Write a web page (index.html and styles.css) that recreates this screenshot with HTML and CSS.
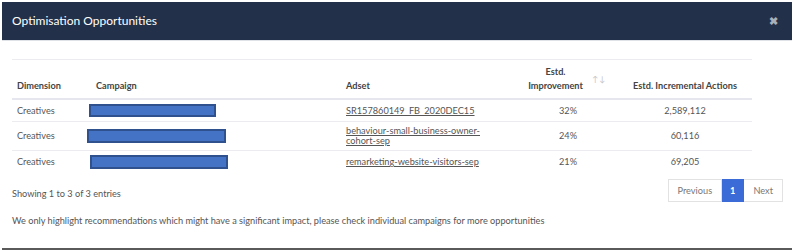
FILE: index.html
```html
<!DOCTYPE html>
<html lang="en">
<head>
  <meta charset="UTF-8" />
  <title>Optimisation Opportunities</title>
  <link rel="stylesheet" href="styles.css">
</head>
<body>
  <div class="modal">
    <div class="modal-header">
      <div class="modal-title">Optimisation Opportunities</div>
      <span class="close">&#10006;</span>
    </div>

    <div class="modal-body">
      <table class="opps">
        <colgroup>
          <col class="c-dim">
          <col class="c-camp">
          <col class="c-adset">
          <col class="c-impr">
          <col class="c-act">
        </colgroup>
        <thead>
          <tr>
            <th>Dimension</th>
            <th>Campaign</th>
            <th>Adset</th>
            <th class="center sorting">Estd.<br>Improvement<span class="sort">&#8593;&#8595;</span></th>
            <th class="center">Estd. Incremental Actions</th>
          </tr>
        </thead>
        <tbody>
          <tr>
            <td>Creatives</td>
            <td class="camp"><span class="redact r1"></span></td>
            <td class="adset"><a href="#">SR157860149_FB_2020DEC15</a></td>
            <td class="center">32%</td>
            <td class="center">2,589,112</td>
          </tr>
          <tr>
            <td>Creatives</td>
            <td class="camp"><span class="redact r2"></span></td>
            <td class="adset"><a href="#">behaviour-small-business-owner-cohort-sep</a></td>
            <td class="center">24%</td>
            <td class="center">60,116</td>
          </tr>
          <tr>
            <td>Creatives</td>
            <td class="camp"><span class="redact r3"></span></td>
            <td class="adset"><a href="#">remarketing-website-visitors-sep</a></td>
            <td class="center">21%</td>
            <td class="center">69,205</td>
          </tr>
        </tbody>
      </table>

      <div class="table-footer">
        <div class="info">Showing 1 to 3 of 3 entries</div>
        <div class="pager">
          <a href="#" class="page">Previous</a>
          <a href="#" class="page active">1</a>
          <a href="#" class="page">Next</a>
        </div>
      </div>

      <p class="note">We only highlight recommendations which might have a significant impact, please check individual campaigns for more opportunities</p>
    </div>
  </div>
</body>
</html>
```

FILE: styles.css
```css
* { margin: 0; padding: 0; box-sizing: border-box; }
body {
  font-family: 'Lato', 'Liberation Sans', sans-serif;
  background: #fff;
  color: #555;
  width: 795px;
  height: 250px;
  overflow: hidden;
}
.modal {
  margin: 2px 3px 0 2px;
  height: 248px;
  border-bottom: 2px solid #5a5a5a;
  display: flex;
  flex-direction: column;
}
.modal-header {
  background: #223149;
  height: 39px;
  border-bottom: 1px solid #dfe3e8;
  display: flex;
  align-items: center;
  justify-content: space-between;
  padding: 0 14px 1px 10px;
}
.modal-title {
  color: #fff;
  font-size: 12px;
}
.close {
  color: #a9b0ba;
  font-size: 11px;
  font-weight: 700;
}
.modal-body {
  padding: 18px 10px 0 10px;
}
.opps {
  width: 740px;
  border-collapse: collapse;
  table-layout: fixed;
  border-top: 1px solid #ececf0;
  font-size: 9.2px;
}
.c-dim { width: 79px; }
.c-camp { width: 250px; }
.c-adset { width: 177px; }
.c-impr { width: 100px; }
.c-act { width: 134px; }
th {
  font-weight: 700;
  color: #444;
  text-align: left;
  vertical-align: bottom;
  line-height: 14px;
  padding: 5px;
  border-bottom: 2px solid #e6e6ee;
  height: 38px;
}
.opps th.center, .opps td.center { text-align: center; }
th.sorting {
  position: relative;
  padding-right: 30px;
}
.sort {
  position: absolute;
  right: 12px;
  top: 12px;
  color: #c4c4c4;
  font-weight: 400;
  font-size: 8px;
  letter-spacing: 1px;
}
td {
  padding: 4px 5px;
  line-height: 10px;
  vertical-align: middle;
  border-bottom: 1px solid #ececf0;
}
tbody tr:last-child td { border-bottom: none; }
td a {
  color: #555;
  text-decoration: underline;
}
td.camp { padding-left: 0; }
td.adset { padding-right: 24px; }
.redact {
  display: block;
  background: #4472c4;
  border: 2px solid #2f528f;
}
.r1 { width: 127px; height: 13px; margin-left: -2px; }
.r2 { width: 139px; height: 14px; margin-left: -4px; }
.r3 { width: 138px; height: 14px; margin-left: -1px; }
.table-footer {
  display: flex;
  justify-content: space-between;
  align-items: flex-start;
  margin-top: 6px;
  width: 771px;
}
.info {
  font-size: 9.2px;
  padding-top: 9px;
}
.pager {
  display: flex;
  font-size: 9.2px;
}
.page {
  display: block;
  height: 23px;
  line-height: 21px;
  padding: 0 9px;
  border: 1px solid #e2e2e2;
  color: #777;
  text-decoration: none;
}
.page + .page { border-left: none; }
.page.active {
  background: #3a6bd6;
  border-color: #3a6bd6;
  color: #fff;
  font-weight: 700;
  padding: 0 8px;
}
.note {
  font-size: 9.2px;
  margin-top: 13px;
}
```
